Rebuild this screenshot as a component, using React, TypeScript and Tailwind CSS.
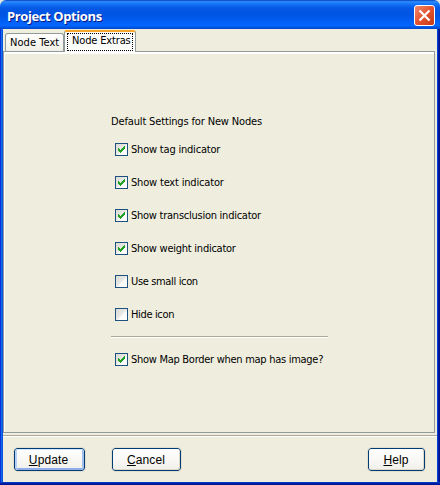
import React from "react";

function Check({ label, checked, spacing }: { label: string; checked?: boolean; spacing: string }) {
  return (
    <label className="flex h-[13px] items-center">
      <span className="flex size-[13px] shrink-0 items-center justify-center border border-[#1c5180] bg-[linear-gradient(135deg,#dcdcd7_0%,#e6e6e2_45%,#fafafa_60%,#ffffff_100%)]">
        {checked && (
          <svg width="7" height="7" viewBox="0 0 7 7" fill="#21a121" shapeRendering="crispEdges">
            <path d="M0 2h1v1h1v1h1v-1h1v-1h1v-1h1v-1h1v3h-1v1h-1v1h-1v1h-1v1h-1v-1h-1v-1h-1z" />
          </svg>
        )}
      </span>
      <span className={"ml-[3px] whitespace-nowrap leading-[13px] " + spacing}>{label}</span>
    </label>
  );
}

function Button({ label, primary, className }: { label: string; primary?: boolean; className: string }) {
  return (
    <button
      className={
        "h-[23px] rounded-[3px] border border-[#003c74] bg-linear-to-b from-white via-[#f9f8f5] to-[#f1efe8] pt-px font-['Liberation_Sans',sans-serif] text-[12px] leading-[20px] tracking-[0.1px] outline outline-1 outline-[#e3dfce] " +
        (primary
          ? "shadow-[inset_0_1px_0_#cee7ff,inset_2px_0_0_#b5cff5,inset_-2px_0_0_#a5c0ee,inset_0_-2px_0_#8fadeb] "
          : "shadow-[inset_-1px_-1px_0_#dcd8cc] ") +
        className
      }
    >
      <span className="underline underline-offset-1">{label[0]}</span>
      {label.slice(1)}
    </button>
  );
}

export default function App() {
  return (
    <div className="flex h-[485px] w-[440px] flex-col overflow-hidden bg-[#e6e8e0] font-['DejaVu_Sans_Condensed','DejaVu_Sans',sans-serif] text-[11px] text-black">
      <header className="flex h-[29px] shrink-0 items-center justify-between rounded-t-[6px] bg-[linear-gradient(180deg,#0842b8_0%,#2e8bff_6%,#1474f8_14%,#0559e5_28%,#0054e3_50%,#0260f5_75%,#0366ff_88%,#0047c8_100%)] pr-[5px] pl-[7px] pt-[2px]">
        <h1 className="whitespace-nowrap font-['Open_Sans',sans-serif] text-[13px] leading-[20px] font-bold tracking-[-0.4px] text-white [text-shadow:1px_1px_0_#0a1883]">
          Project Options
        </h1>
        <button className="flex size-[21px] items-center justify-center rounded-[3px] border border-white bg-linear-to-br from-[#f0886c] via-[#e3532f] to-[#c33a16]">
          <svg width="13" height="13" viewBox="0 0 13 13" className="shrink-0" stroke="white" strokeWidth="2.2" fill="none">
            <path d="M1.5 1.5l10 10M11.5 1.5l-10 10" />
          </svg>
        </button>
      </header>
      <div className="flex min-h-0 flex-1 flex-col bg-[linear-gradient(90deg,#0831d9_0_1px,#166aee_1px_2px,#0855dd_2px_3px,#0855dd_3px_437px,#0540d8_437px_438px,#001ea0_438px_439px,#00138c_439px)] px-[3px]">
        <main className="flex min-h-0 flex-1 flex-col bg-[#efeede]">
          <nav className="flex h-[22px] shrink-0 items-end pl-[2px]">
            <div className="h-[18px] w-[59px] rounded-t-[3px] border border-b-0 border-[#919b9c] bg-linear-to-b from-white to-[#f0efe6] pl-[4px] leading-[18px] whitespace-nowrap">
              <span className="tracking-[0.05px]">Node Text</span>
            </div>
            <div className="z-10 -mb-px h-[22px] w-[72px] rounded-t-[3px] border-x border-t-2 border-x-[#919b9c] border-t-[#f5a62d] bg-[#fcfcfa] px-[2px] pt-px">
              <div className="h-[18px] border border-dotted border-black pl-[4px] leading-[14px] whitespace-nowrap">
                <span className="tracking-[-0.15px]">Node Extras</span>
              </div>
            </div>
          </nav>
          <section className="h-[382px] w-[432px] shrink-0 border border-[#919b9c] pt-[63px] pl-[107px] shadow-[inset_1px_0_0_white,inset_0_2px_0_white]">
            <p className="h-[13px] leading-[13px] whitespace-nowrap tracking-[-0.15px]">Default Settings for New Nodes</p>
            <div className="mt-[15px] ml-[4px] flex flex-col gap-5">
              <Check label="Show tag indicator" checked spacing="tracking-[-0.2px]" />
              <Check label="Show text indicator" checked spacing="tracking-[-0.18px]" />
              <Check label="Show transclusion indicator" checked spacing="tracking-[-0.25px]" />
              <Check label="Show weight indicator" checked spacing="tracking-[-0.25px]" />
              <Check label="Use small icon" spacing="tracking-[-0.35px]" />
              <Check label="Hide icon" spacing="tracking-[-0.35px]" />
            </div>
            <div className="mt-[15px] h-[2px] w-[217px] border-t border-b border-t-[#aca899] border-b-white" />
            <div className="mt-[15px] ml-[4px]">
              <Check label="Show Map Border when map has image?" checked spacing="tracking-[-0.28px]" />
            </div>
          </section>
          <div className="mt-[2px] h-[2px] shrink-0 border-t border-b border-t-[#aca899] border-b-white" />
          <footer className="flex pt-[11px] pl-[11px]">
            <Button label="Update" primary className="w-[71px] pr-[2px]" />
            <Button label="Cancel" className="ml-[27px] w-[69px] pr-[1px]" />
            <Button label="Help" className="ml-[187px] w-[57px] pr-[1px]" />
          </footer>
        </main>
      </div>
      <div className="h-[3px] shrink-0 bg-linear-to-b from-[#0441d8] via-[#001ea0] to-[#00138c]" />
    </div>
  );
}
